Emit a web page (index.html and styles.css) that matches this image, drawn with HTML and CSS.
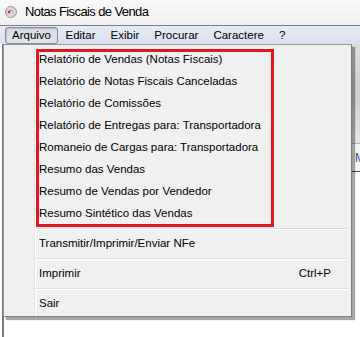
FILE: index.html
```html
<!DOCTYPE html>
<html lang="pt">
<head>
    <meta charset="UTF-8">
    <title>Notas Fiscais de Venda</title>
    <link rel="stylesheet" href="styles.css">
</head>
<body>
    <div class="window">
        <div class="titlebar">
            <svg class="app-icon" width="12" height="12" viewBox="0 0 12 12">
                <circle cx="6" cy="6" r="5.5" fill="#d9d9d9" stroke="#9a9a9a" stroke-width="1"/>
                <path d="M2.5 6.5 C3.5 4 6 3.5 8.5 5 L7 7.5 C6 6.5 4.5 6.5 3.5 7.5 Z" fill="#c8262c"/>
                <circle cx="6.5" cy="6" r="1.3" fill="#e8e8e8"/>
            </svg>
            <span class="title">Notas Fiscais de Venda</span>
        </div>

        <div class="menubar">
            <span class="menu-top active">Arquivo</span>
            <span class="menu-top">Editar</span>
            <span class="menu-top">Exibir</span>
            <span class="menu-top">Procurar</span>
            <span class="menu-top">Caractere</span>
            <span class="menu-top">?</span>
        </div>

        <div class="client">
            <div class="toolbar"></div>
            <div class="fieldrow">
                <span></span>
                <span class="cut">M</span>
            </div>
        </div>

        <!-- menu Arquivo aberto -->
        <div class="dropdown">
            <div class="group">
                <div class="item">Relatório de Vendas (Notas Fiscais)</div>
                <div class="item">Relatório de Notas Fiscais Canceladas</div>
                <div class="item">Relatório de Comissões</div>
                <div class="item">Relatório de Entregas para: Transportadora</div>
                <div class="item">Romaneio de Cargas para: Transportadora</div>
                <div class="item">Resumo das Vendas</div>
                <div class="item">Resumo de Vendas por Vendedor</div>
                <div class="item">Resumo Sintético das Vendas</div>
            </div>
            <div class="sep"></div>
            <div class="item">Transmitir/Imprimir/Enviar NFe</div>
            <div class="sep"></div>
            <div class="item"><span>Imprimir</span><span class="shortcut">Ctrl+P</span></div>
            <div class="sep"></div>
            <div class="item">Sair</div>
        </div>
    </div>
</body>
</html>
```

FILE: styles.css
```css
body {
    margin: 0;
    font-family: "Liberation Sans", Arial, sans-serif;
    background-color: #fff;
    color: #000;
}

.window {
    position: relative;
    width: 360px;
    height: 337px;
    overflow: hidden;
    background-color: #fff;
}

.titlebar {
    height: 25px;
    display: flex;
    align-items: center;
    padding-left: 5px;
    background: linear-gradient(#f9f9f9, #f0f0f0);
    border-bottom: 1px solid #7f7f7f;
}

.app-icon {
    margin-right: 8px;
    margin-top: -2px;
}

.title {
    font-size: 13px;
    letter-spacing: -0.6px;
    color: #000;
    margin-top: -2px;
}

.menubar {
    height: 18px;
    display: flex;
    align-items: center;
    padding-left: 5px;
    background: linear-gradient(#e6ebf5, #d9e0ee);
    font-size: 11.5px;
}

.menu-top {
    padding: 1px 6.5px 2px 6.5px;
    border: 1px solid transparent;
}

.menu-top.active {
    padding: 1px 6px 2px 6px;
    border-color: #8a8e96;
    border-radius: 3px;
    background: linear-gradient(#d5dae4, #e0e4ec);
    box-shadow: inset 1px 1px 1px rgba(0, 0, 0, 0.15);
}

.client {
    margin-left: 2px;
    border-left: 2px solid #7a7a7a;
    height: 293px;
}

.toolbar {
    height: 99px;
    background: linear-gradient(#dcdcdc, #cfcfcf 50%, #e4e4e4);
}

.fieldrow {
    display: grid;
    grid-template-columns: 351px 1fr;
    align-items: center;
    height: 27px;
    border-top: 1px solid #b5b5b5;
    border-bottom: 1px solid #4a4a4a;
    background-color: #f4f4f4;
    font-size: 12px;
}

.cut {
    color: #2b4f8c;
}

.dropdown {
    position: absolute;
    left: 3px;
    top: 44px;
    width: 347px;
    padding: 3px 0 2px 0;
    border: 1px solid #979797;
    border-right-color: #7d7d7d;
    border-bottom-color: #7d7d7d;
    background: linear-gradient(to right, transparent 30px, #e2e3e3 30px, #e2e3e3 31px, #fff 31px, #fff 32px, transparent 32px), #f0f0f0;
    box-shadow: 3px 3px 1px rgba(0, 0, 0, 0.35);
    font-size: 11.5px;
}

.group {
    position: relative;
}

.group::after {
    content: "";
    position: absolute;
    left: 32px;
    top: 1px;
    width: 238px;
    height: 178px;
    border: 3px solid #e3151f;
    box-sizing: border-box;
}

.item {
    height: 22px;
    display: flex;
    align-items: center;
    padding-left: 35px;
    padding-right: 20px;
}

.shortcut {
    margin-left: auto;
}

.sep {
    height: 8px;
    margin-left: 31px;
    margin-right: 2px;
    background: linear-gradient(transparent 4px, #e0e0e0 4px, #e0e0e0 5px, #fff 5px, #fff 6px, transparent 6px);
}
```
